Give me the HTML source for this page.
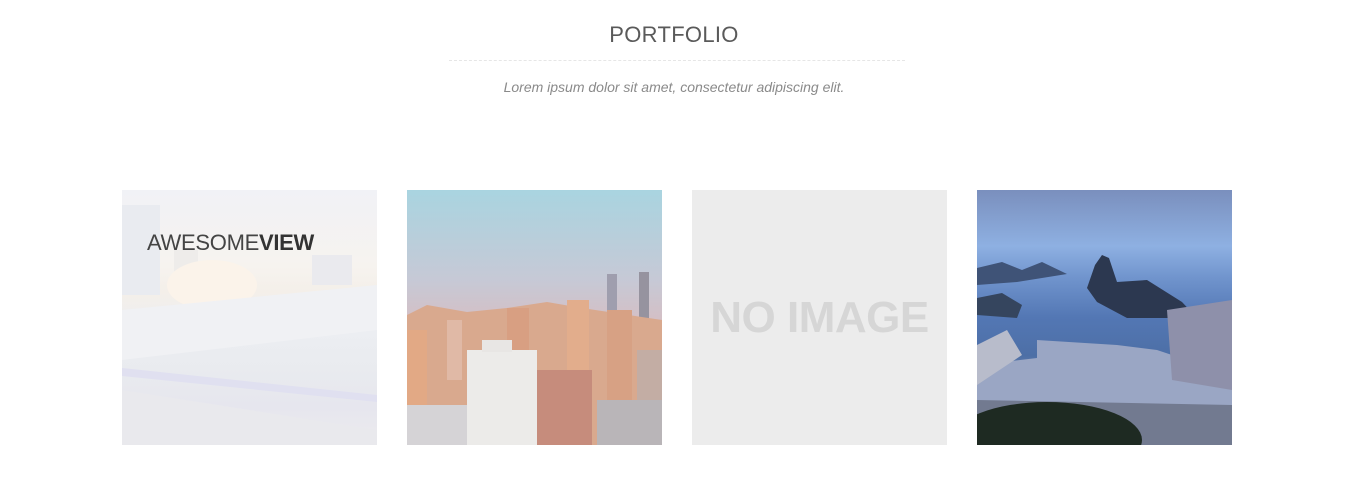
<!DOCTYPE html>
<html><head><meta charset="utf-8"><style>
*{margin:0;padding:0;box-sizing:border-box}
html,body{width:1348px;height:479px;background:#fff;overflow:hidden;font-family:"Liberation Sans",sans-serif}
h2{position:absolute;top:22px;left:0;width:1348px;text-align:center;font-weight:400;font-size:22px;color:#5a5a5a;letter-spacing:0.3px}
.line{position:absolute;top:60px;left:449px;width:456px;border-top:1px dashed #e6e6e6}
.sub{position:absolute;top:79px;left:0;width:1348px;text-align:center;font-style:italic;font-size:14px;color:#8a8a8a}
.card{position:absolute;top:190px;width:255px;height:255px;overflow:hidden}
</style></head><body>
<h2>PORTFOLIO</h2>
<div class="line"></div>
<div class="sub">Lorem ipsum dolor sit amet, consectetur adipiscing elit.</div>

<div class="card" style="left:122px;background:linear-gradient(180deg,#f1f2f6 0%,#f6f3ef 30%,#f4efe9 40%,#eceef2 55%,#e9ebef 70%,#e6e6ee 85%,#ecebee 100%)">
<svg width="255" height="255" style="position:absolute;left:0;top:0">
<rect x="0" y="15" width="38" height="90" fill="#e9ebf0"/>
<rect x="52" y="60" width="24" height="45" fill="#eeecea"/>
<rect x="190" y="65" width="40" height="30" fill="#eaeaee"/>
<ellipse cx="90" cy="95" rx="45" ry="25" fill="#fbf3ea"/>
<polygon points="0,120 255,95 255,140 0,170" fill="#f0f1f4"/>
<polygon points="0,178 255,205 255,212 0,186" fill="#e0e0f0"/>
<polygon points="0,200 255,240 255,255 0,255" fill="#e9e9ed"/>
</svg>
<div style="position:absolute;left:25px;top:40px;font-size:22px;color:#333;letter-spacing:-0.3px"><span style="font-weight:300;color:#444">AWESOME</span><b>VIEW</b></div>
</div>

<div class="card" style="left:407px;background:linear-gradient(180deg,#a9d4e0 0%,#c6c9d6 35%,#d7bdc1 55%,#c8a69b 100%)">
<svg width="255" height="255" style="position:absolute;left:0;top:0">
<rect x="200" y="84" width="10" height="90" fill="#9f9eae"/>
<rect x="232" y="82" width="10" height="90" fill="#96939f"/>
<polygon points="0,125 20,115 60,122 100,118 140,112 175,118 255,130 255,255 0,255" fill="#d9a98e"/>
<rect x="0" y="140" width="20" height="115" fill="#e2a985"/>
<rect x="40" y="130" width="15" height="60" fill="#e0b9a6"/>
<rect x="100" y="118" width="22" height="100" fill="#d89f82"/>
<rect x="160" y="110" width="22" height="120" fill="#e2ad8c"/>
<rect x="200" y="120" width="25" height="120" fill="#d7a184"/>
<rect x="130" y="180" width="55" height="75" fill="#c68c7c"/>
<rect x="230" y="160" width="25" height="95" fill="#c3ada4"/>
<rect x="0" y="215" width="60" height="40" fill="#d5d3d6"/>
<rect x="60" y="160" width="70" height="95" fill="#ecebe9"/>
<rect x="75" y="150" width="30" height="12" fill="#e8e6e4"/>
<rect x="190" y="210" width="65" height="45" fill="#b9b5b8"/>
</svg>
</div>

<div class="card" style="left:692px;background:#ececec">
<div style="position:absolute;left:0;top:103px;width:255px;text-align:center;font-size:44px;font-weight:700;color:#d6d6d6;letter-spacing:-0.5px">NO IMAGE</div>
</div>

<div class="card" style="left:977px;background:linear-gradient(180deg,#7a8fbd 0%,#8eb0e2 22%,#6f93cc 35%,#5377b4 50%,#4d6fa6 65%,#8a94b0 78%,#586078 100%)">
<svg width="255" height="255" style="position:absolute;left:0;top:0">
<polygon points="0,78 25,72 45,80 65,72 90,84 40,92 0,95" fill="#3f5377"/>
<polygon points="110,98 118,75 125,65 132,68 140,92 170,90 205,112 220,128 150,128 120,112" fill="#2c3850"/>
<polygon points="0,108 25,103 45,115 40,128 0,125" fill="#35455e"/>
<polygon points="60,150 140,155 180,160 210,170 255,160 255,255 0,255 0,175 60,168" fill="#9aa6c4"/>
<polygon points="190,120 255,110 255,200 195,190" fill="#8e90aa"/>
<polygon points="0,210 255,215 255,255 0,255" fill="#727a90"/>
<ellipse cx="70" cy="250" rx="95" ry="38" fill="#1e2a22"/>
<polygon points="0,155 30,140 45,165 0,195" fill="#b8bccb"/>
</svg>
</div>
</body></html>
